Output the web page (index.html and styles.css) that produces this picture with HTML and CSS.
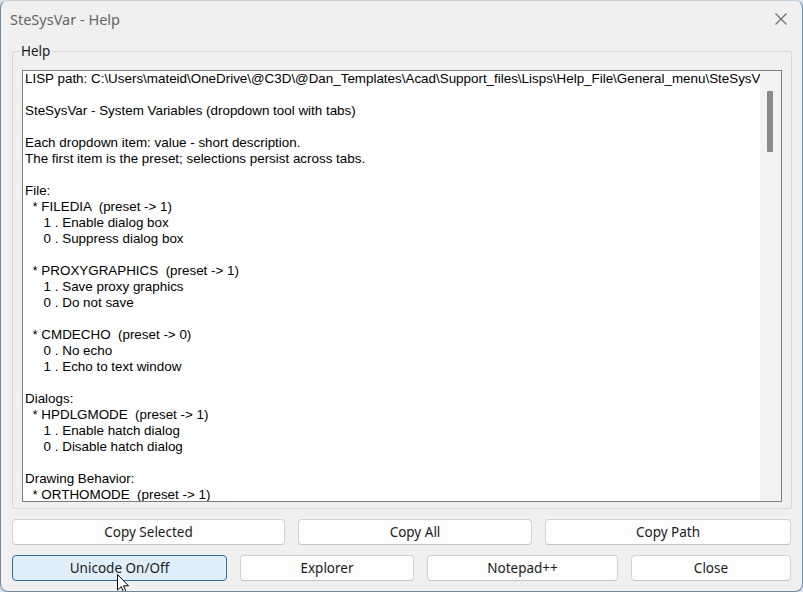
FILE: index.html
```html
<!DOCTYPE html>
<html lang="en">
<head>
  <meta charset="UTF-8">
  <title>SteSysVar - Help</title>
  <link rel="stylesheet" href="styles.css">
</head>
<body>
  <div class="window">
    <div class="titlebar">
      <span class="title">SteSysVar - Help</span>
      <span class="close-btn">
        <svg width="12" height="12" viewBox="0 0 12 12"><path d="M0.5 0.5 L11.5 11.5 M11.5 0.5 L0.5 11.5" stroke="#6b6b6b" stroke-width="1.1" fill="none"/></svg>
      </span>
    </div>

    <fieldset class="group">
      <legend>Help</legend>
      <div class="textbox">
        <div class="text">LISP path: C:\Users\mateid\OneDrive\@C3D\@Dan_Templates\Acad\Support_files\Lisps\Help_File\General_menu\SteSysVar.lsp

SteSysVar - System Variables (dropdown tool with tabs)

Each dropdown item: value - short description.
The first item is the preset; selections persist across tabs.

File:
  * FILEDIA  (preset -> 1)
     1 . Enable dialog box
     0 . Suppress dialog box

  * PROXYGRAPHICS  (preset -> 1)
     1 . Save proxy graphics
     0 . Do not save

  * CMDECHO  (preset -> 0)
     0 . No echo
     1 . Echo to text window

Dialogs:
  * HPDLGMODE  (preset -> 1)
     1 . Enable hatch dialog
     0 . Disable hatch dialog

Drawing Behavior:
  * ORTHOMODE  (preset -> 1)</div>
        <div class="scrollbar"><div class="thumb"></div></div>
      </div>
    </fieldset>

    <div class="row row-top">
      <button class="btn">Copy Selected</button>
      <button class="btn">Copy All</button>
      <button class="btn">Copy Path</button>
    </div>
    <div class="row row-bottom">
      <button class="btn hover">Unicode On/Off</button>
      <button class="btn">Explorer</button>
      <button class="btn">Notepad++</button>
      <button class="btn">Close</button>
    </div>

    <!-- mouse pointer resting on the first button -->
    <svg class="pointer" width="13" height="20" viewBox="0 0 13 20">
      <path d="M0.5 0.5 L0.5 16 L4.2 12.6 L6.8 18.6 L9 17.6 L6.5 11.8 L11.5 11.8 Z" fill="#fff" stroke="#000" stroke-width="1" stroke-linejoin="round"/>
    </svg>
  </div>
</body>
</html>
```

FILE: styles.css
```css
body {
  margin: 0;
  background: #d9e2ea;
  font-family: "Noto Sans", "Open Sans", sans-serif;
}

.window {
  position: relative;
  width: 803px;
  height: 592px;
  box-sizing: border-box;
  background: #f0f0f0;
  border: 1px solid #6f8aa3;
  border-top-color: #c9d3dc;
  border-radius: 8px;
  overflow: hidden;
  display: flex;
  flex-direction: column;
}

.titlebar {
  height: 42px;
  flex: none;
  display: flex;
  align-items: center;
  justify-content: space-between;
  padding: 0 15px 6px 9px;
  box-sizing: border-box;
}

.title {
  font-size: 14.5px;
  color: #666;
}

.close-btn {
  display: flex;
}

/* group box around the help text */
.group {
  margin: 0 10px 0 11px;
  padding: 11px 9px 6px 9px;
  border: 1px solid #d6d6d6;
  border-radius: 2px;
  min-width: 0;
}

.group legend {
  padding: 0 2px;
  margin-left: -3px;
  font-size: 13.5px;
  color: #1a1a1a;
  line-height: 16px;
}

.textbox {
  height: 432px;
  display: flex;
  background: #fff;
  border: 1px solid #7d7d7d;
  box-sizing: border-box;
}

.text {
  flex: 1;
  overflow: hidden;
  white-space: pre;
  font-family: "Liberation Sans", Arial, sans-serif;
  font-size: 13.4px;
  line-height: 16px;
  color: #000;
  padding: 0 0 0 2px;
}

.scrollbar {
  width: 21px;
  flex: none;
  background: #f3f3f3;
}

.thumb {
  width: 6px;
  height: 61px;
  margin: 20px 0 0 7px;
  background: #8a8a8a;
  border-radius: 1px;
}

.row {
  display: grid;
  column-gap: 13px;
  margin: 0 11px 0 11px;
}

.row-top {
  margin-top: 10px;
  grid-template-columns: 273px 234px 1fr;
}

.row-bottom {
  margin-top: 10px;
  grid-template-columns: 215px 174px 191px 1fr;
}

.btn {
  height: 26px;
  background: #fdfdfd;
  border: 1px solid #d2d2d2;
  border-bottom-color: #c4c4c4;
  border-radius: 4px;
  font-family: "Noto Sans", "Open Sans", sans-serif;
  font-size: 13.5px;
  color: #1b1b1b;
  padding: 0 0 1px;
}

.btn.hover {
  background: #e0eef9;
  border-color: #2f6fa6;
}

.pointer {
  position: absolute;
  left: 116px;
  top: 573px;
}
```
